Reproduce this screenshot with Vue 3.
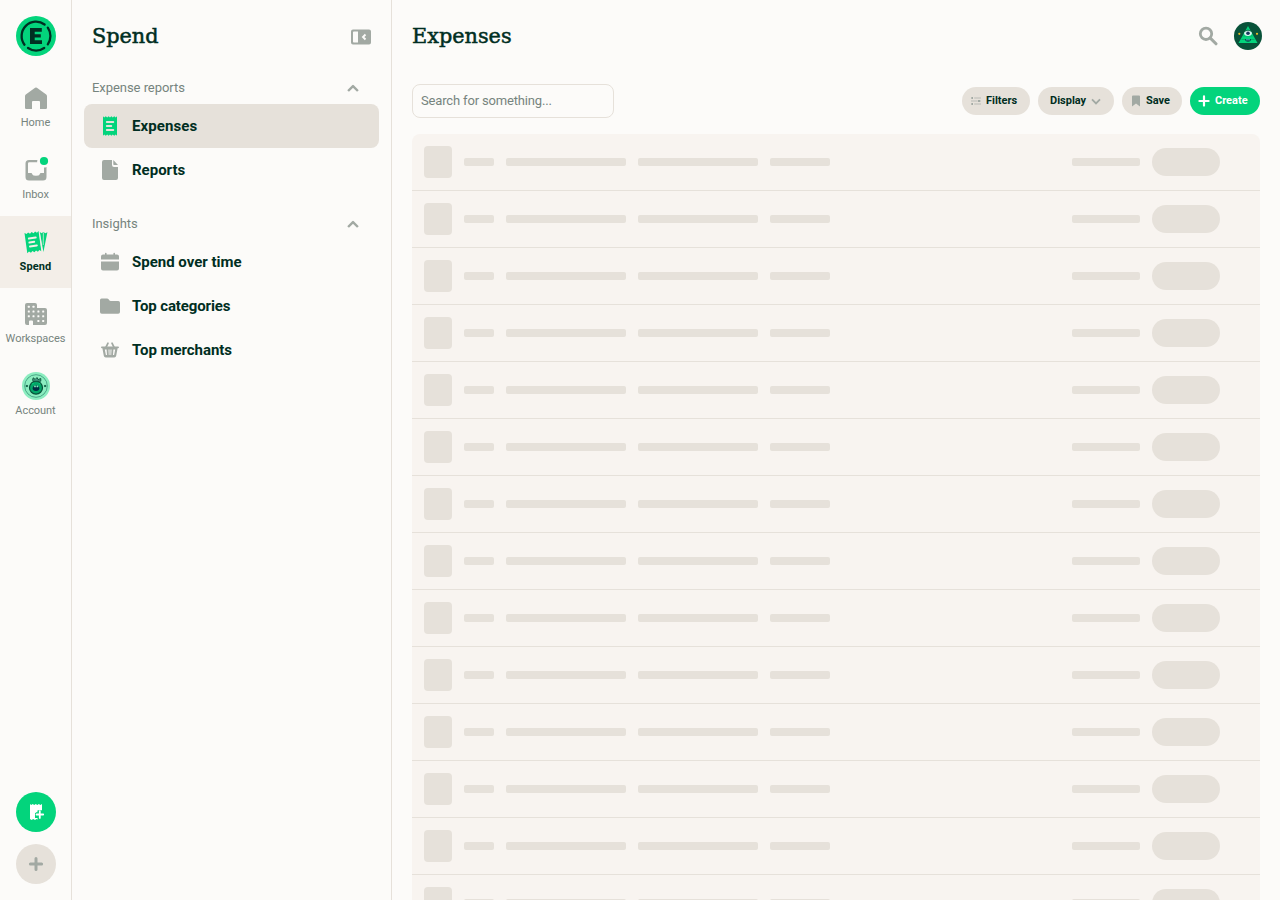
<script setup>
const tabs = ['Home', 'Inbox', 'Spend', 'Workspaces', 'Account']
const sections = [
  { title: 'Expense reports', cls: 's0', items: [['Expenses', 'receipt'], ['Reports', 'document']] },
  { title: 'Insights', cls: 's1', items: [['Spend over time', 'calendar'], ['Top categories', 'folder'], ['Top merchants', 'basket']] },
]
</script>

<template>
  <div class="app">
    <nav class="rail">
      <svg class="logo" viewBox="0 0 40 40">
        <circle cx="20" cy="20" r="20" fill="#03d47c" />
        <g fill="none" stroke="#002e22" stroke-width="2.3" stroke-linecap="round">
          <path d="M8.5 28.7A14.4 14.4 0 0 1 28.6 8.5" />
          <path d="M31.8 11.7A14.4 14.4 0 0 1 31.8 28.3" />
          <path d="M12 32A14.4 14.4 0 0 0 28.2 32" />
        </g>
        <path d="M14 12.1H25.8V15.8H18.7V18.3H24.8V21.6H18.7V24.3H26V28H14Z" fill="#002e22" />
      </svg>
      <div v-for="t in tabs" :key="t" class="tab" :class="[t.toLowerCase(), { active: t === 'Spend' }]">
        <svg v-if="t === 'Home'" class="tab-icon" viewBox="0 0 28 28">
          <path d="M3 12.2Q3 11.2 3.8 10.6L13.1 3.8Q14 3.1 14.9 3.8L24.2 10.6Q25 11.2 25 12.2V23.8Q25 25 23.8 25H18V18Q18 17 17 17H11Q10 17 10 18V25H4.2Q3 25 3 23.8Z" />
        </svg>
        <svg v-else-if="t === 'Inbox'" class="tab-icon" viewBox="0 0 28 28">
          <path fill-rule="evenodd" d="M7 4H15.5Q15 5 15.2 6.2H7.3Q6 6.2 6 7.5V17H9Q10 17 10.4 18.4Q10.9 19.8 14 19.8Q17.1 19.8 17.6 18.4Q18 17 19 17H22V11.5Q23.5 11.5 24.5 11V21Q24.5 24.5 21 24.5H7Q3.5 24.5 3.5 21V7.5Q3.5 4 7 4Z" />
          <circle cx="22" cy="5" r="4.1" fill="#03d47c" />
        </svg>
        <svg v-else-if="t === 'Spend'" class="tab-icon" viewBox="0 0 28 28">
          <g transform="rotate(-8 11 14)">
            <path d="M3.8 4L5.7 5.3 7.5 4 9.2 5.3 11 4 12.8 5.3 14.5 4 16.2 5.3 18 4V24.3L16.2 22.9 14.5 24.3 12.8 22.9 11 24.3 9.2 22.9 7.5 24.3 5.7 22.9 3.8 24.3Z" />
            <path d="M7.4 10H14.3M7.4 14H12.2M7.4 18H14.3" stroke="#f3eee8" stroke-width="2" stroke-linecap="round" />
          </g>
          <path d="M17.8 4L19.6 5.2 21.3 4 23.4 5.2 25.4 4.2 21.4 24Z" />
          <path d="M17.5 5L20.2 23.5M21.4 4.5L21.2 17" stroke="#f3eee8" stroke-width=".7" />
        </svg>
        <svg v-else-if="t === 'Workspaces'" class="tab-icon" viewBox="0 0 28 28">
          <path d="M3 5Q3 3 5 3H13Q15 3 15 5V8H23Q25 8 25 10V23Q25 25 23 25H11V21.5Q11 20.5 10 20.5H8Q7 20.5 7 21.5V25H5Q3 25 3 23Z" />
          <g fill="#fcfbf9">
            <rect v-for="[x, y] in [[5.8,5.8],[10.5,5.8],[5.8,10.5],[10.5,10.5],[15.4,10.5],[20.2,10.5],[5.8,15.3],[10.5,15.3],[15.4,15.3],[20.2,15.3],[15.4,20],[20.2,20]]" :key="x + '-' + y" :x="x" :y="y" width="2" height="2" rx=".5" />
          </g>
        </svg>
        <svg v-else class="tab-icon" viewBox="0 0 28 28">
          <circle cx="14" cy="14" r="14" fill="#8cedc0" />
          <circle cx="14" cy="14" r="11.3" fill="none" stroke="#1c7862" stroke-width=".6" />
          <path d="M3.3 14L5 12.7 6.3 14 5 15.3ZM24.7 14L23 12.7 21.7 14 23 15.3Z" fill="#085239" />
          <circle cx="14" cy="15.7" r="6.5" fill="#03a668" stroke="#085239" stroke-width="1.2" />
          <path d="M10.6 8.2L11.2 5.8 13.2 7.4 15 5.5 16 7.6 18.8 6.5V9.2H11.5Z" fill="#4b9a87" stroke="#085239" stroke-width=".9" />
          <ellipse cx="14" cy="16.2" rx="3.3" ry="2.7" fill="#002e42" />
          <circle cx="13" cy="14.4" r=".9" fill="#8cedc0" /><circle cx="15.4" cy="14.4" r=".9" fill="#8cedc0" />
          <path d="M10 12L11.8 11.3M16.6 11.3L18.3 12" stroke="#03d47c" stroke-width="1" />
        </svg>
        <span>{{ t }}</span>
      </div>
      <div class="rail-actions">
        <svg viewBox="0 0 40 40">
          <circle cx="20" cy="20" r="20" fill="#03d47c" />
          <path d="M14 12L15.2 13 16.7 12 18.2 13 19.8 12 21.3 13 22.8 12 24.4 13 26 12V18.4H21.7V21H19V26H21.7V27.5L20.5 27 19 28 17.2 27 15.6 28 14 27Z" fill="#fff" />
          <path d="M23.8 18.5V26.5M19.8 22.5H27.8" stroke="#03d47c" stroke-width="4.4" />
          <path d="M23.8 19.2V25.9M20.5 22.5H27.2" stroke="#fff" stroke-width="1.8" stroke-linecap="round" />
        </svg>
        <svg viewBox="0 0 40 40">
          <circle cx="20" cy="20" r="20" fill="#e6e1da" />
          <path d="M20 14.4V25.6M14.4 20H25.6" stroke="#a2a9a3" stroke-width="3" stroke-linecap="round" />
        </svg>
      </div>
    </nav>

    <aside class="sidebar">
      <header class="side-head">
        <h1 class="h-spend">Spend</h1>
        <svg class="collapse" width="20" height="16" viewBox="0 0 20 16">
          <path fill="#a2a9a3" fill-rule="evenodd" d="M2 .5H18Q20 .5 20 2.5V13.5Q20 15.5 18 15.5H2Q0 15.5 0 13.5V2.5Q0 .5 2 .5ZM2.8 2.5Q2 2.5 2 3.3V12.7Q2 13.5 2.8 13.5H7V2.5Z" />
          <path d="M14.5 5.5L12 8L14.5 10.5" fill="none" stroke="#fcfbf9" stroke-width="1.9" />
        </svg>
      </header>
      <section v-for="s in sections" :key="s.title" class="section" :class="s.cls">
        <div class="section-title">
          <span>{{ s.title }}</span>
          <svg width="12" height="8" viewBox="0 0 12 8"><path d="M1.1 7L6 2.1L10.9 7" fill="none" stroke="#a2a9a3" stroke-width="2.4" stroke-linejoin="round" /></svg>
        </div>
        <div v-for="[label, icon] in s.items" :key="label" class="item" :class="[icon, { selected: label === 'Expenses' }]">
          <svg class="item-icon" viewBox="0 0 20 20">
            <template v-if="icon === 'receipt'">
              <path fill="#03d47c" d="M3 .3L4.2 1.6 5.8 .3 7.2 1.6 8.6 .3 10 1.6 11.4 .3 12.8 1.6 14.2 .3 15.7 1.6 17 .3V19.7L15.7 18.4 14.2 19.7 12.8 18.4 11.4 19.7 10 18.4 8.6 19.7 7.2 18.4 5.8 19.7 4.2 18.4 3 19.7Z" />
              <path d="M6.8 6H13.3M6.8 10H11.3M6.8 14H13.3" stroke="#e6e1da" stroke-width="1.9" stroke-linecap="round" />
            </template>
            <path v-else-if="icon === 'document'" d="M4 0H12V5Q12 7 14 7H18V18Q18 20 16 20H4Q2 20 2 18V2Q2 0 4 0ZM13.3 0L18 5H14Q13.3 5 13.3 4.3Z" />
            <path v-else-if="icon === 'calendar'" d="M5 1.5Q5 .8 5.8 .8T6.6 1.5V2.5H13.4V1.5Q13.4 .8 14.2 .8T15 1.5V2.5H17Q19 2.5 19 4.5V7.5H1V4.5Q1 2.5 3 2.5H5ZM1 9.5H19V16.5Q19 18.5 17 18.5H3Q1 18.5 1 16.5Z" />
            <path v-else-if="icon === 'folder'" d="M0 4Q0 2.5 1.5 2.5H7Q8 2.5 8.6 3.3L9.3 4.3Q9.8 5 10.7 5H18.3Q20 5 20 6.7V16Q20 17.8 18.2 17.8H1.8Q0 17.8 0 16Z" />
            <g v-else>
              <path d="M6.1 7L8 3.2M13.9 7L12 3.2" stroke="#a2a9a3" stroke-width="1.7" stroke-linecap="round" />
              <path fill-rule="evenodd" d="M2 6.4H18Q19 6.4 19 7.3T18 8.3H17.6L16.2 15.7Q15.9 17.5 14.2 17.5H5.8Q4.1 17.5 3.8 15.7L2.4 8.3H2Q1 8.3 1 7.3T2 6.4ZM4.8 9.5L5.9 15H7L6.6 9.5ZM8.5 9.5L8.8 15H9.5V9.5ZM11.5 9.5 11.2 15H10.5V9.5ZM13.4 9.5L13 15H14.1L15.2 9.5Z" />
            </g>
          </svg>
          <span>{{ label }}</span>
        </div>
      </section>
    </aside>

    <main class="main">
      <header class="main-head">
        <h1 class="h-exp">Expenses</h1>
        <svg class="search-icon" width="20" height="20" viewBox="0 0 20 20"><circle cx="8" cy="7.8" r="5.7" fill="none" stroke="#a2a9a3" stroke-width="2.8" /><path d="M12.3 12.1L18 17.8" stroke="#a2a9a3" stroke-width="3" stroke-linecap="round" /></svg>
        <svg class="avatar" width="28" height="28" viewBox="0 0 28 28">
          <circle cx="14" cy="14" r="14" fill="#085239" />
          <path d="M14 4L23.5 21H4.5Z" fill="#03d47c" />
          <path d="M9.5 14H18.5M7.5 17.5H20.5" stroke="#079b62" stroke-width=".7" />
          <ellipse cx="14" cy="11.3" rx="3.8" ry="2.7" fill="#d9f5ee" /><circle cx="14" cy="11.2" r="1.8" fill="#17355e" />
          <path d="M10.2 9.4Q14 6.8 17.8 9.4" fill="none" stroke="#085239" stroke-width=".8" />
          <path d="M11 17H17Q17 19.8 14 19.8T11 17Z" fill="#064a48" /><path d="M12 17.8H16" stroke="#54d8d8" stroke-width=".8" />
          <circle cx="5.3" cy="11.8" r="1.1" fill="#e7bd24" /><circle cx="23" cy="11.8" r="1.1" fill="#e7bd24" />
        </svg>
      </header>
      <div class="toolbar">
        <input class="search" type="text" placeholder="Search for something..." />
        <div class="buttons">
          <button class="btn filters">
            <svg width="10" height="8" viewBox="0 0 10 8"><path d="M0 1H1.7M3.2 1H10M0 4H6.7M8.2 4H10M0 7H1.7M3.2 7H10" stroke="#b9bbb5" stroke-width="1.1" /><path d="M.5 0H2V2H.5ZM7 3H9V5H7ZM.5 6H2V8H.5Z" /></svg>
            <span>Filters</span>
          </button>
          <button class="btn display">
            <span>Display</span>
            <svg width="10" height="7" viewBox="0 0 10 7"><path d="M1 1.4L5 5.4L9 1.4" fill="none" stroke="#a2a9a3" stroke-width="1.8" /></svg>
          </button>
          <button class="btn save">
            <svg width="8" height="12" viewBox="0 0 8 12"><path d="M0 1.5Q0 .5 1 .5H7Q8 .5 8 1.5V11.5L4 8.5L0 11.5Z" /></svg>
            <span>Save</span>
          </button>
          <button class="btn create">
            <svg width="12" height="12" viewBox="0 0 12 12"><path d="M6 1.4V10.6M1.4 6H10.6" stroke="#fff" stroke-width="2.2" stroke-linecap="round" /></svg>
            <span>Create</span>
          </button>
        </div>
      </div>
      <div class="table">
        <div v-for="n in 14" :key="n" class="row">
          <i class="thumb" /><i class="bar tiny" /><i class="bar long" /><i class="bar long" /><i class="bar mid" />
          <i class="bar amount" /><i class="pill" />
        </div>
      </div>
    </main>
  </div>
</template>

<style>
body { margin: 0; overflow: hidden; }
</style>

<style scoped>
* { box-sizing: border-box; }
.app { display: flex; width: 1280px; height: 900px; overflow: hidden; background: #fcfbf9; color: #002e22; font-family: Roboto, "Liberation Sans", sans-serif; }
svg { display: block; flex: none; fill: #a2a9a3; }
.rail { width: 72px; border-right: 1px solid #e6e1da; display: flex; flex-direction: column; align-items: center; padding: 16px 0; flex: none; }
.logo { width: 40px; height: 40px; margin-bottom: 16px; }
.tab { width: 71px; height: 72px; padding-top: 12px; display: flex; flex-direction: column; align-items: center; font-size: 11px; line-height: 14px; color: #76847e; white-space: nowrap; }
.tab span { margin-top: 4px; letter-spacing: -.05px; }
.tab-icon { width: 28px; height: 28px; }
.tab.active { background: #f3eee8; color: #002e22; font-weight: 700; }
.tab.active span { letter-spacing: .1px; }
.tab.active svg { fill: #03d47c; }
.rail-actions { margin-top: auto; display: flex; flex-direction: column; gap: 12px; }
.rail-actions svg { width: 40px; height: 40px; }
.sidebar { width: 320px; border-right: 1px solid #e6e1da; flex: none; }
h1 { margin: 0; font: 400 20.8px/28px "DejaVu Serif", serif; -webkit-text-stroke: .5px #002e22; }
.side-head { height: 72px; padding: 0 20px; display: flex; align-items: center; justify-content: space-between; }
.collapse { margin-top: 1px; }
.section { padding: 0 12px; }
.section-title { height: 32px; padding: 0 20px 0 8px; display: flex; align-items: center; justify-content: space-between; font-size: 13px; color: #76847e; }
.section-title span { padding-bottom: 2px; letter-spacing: -.05px; }
.s1 { margin-top: 16px; }
.item { height: 44px; border-radius: 8px; padding-left: 16px; display: flex; align-items: center; gap: 12px; font-size: 15px; font-weight: 700; }
.receipt { letter-spacing: .1px; }
.folder { letter-spacing: -.12px; }
.basket { letter-spacing: -.04px; }
.item-icon { width: 20px; height: 20px; }
.selected { background: #e6e1da; }
.main { flex: 1; padding: 0 20px; min-width: 0; }
.main-head { height: 72px; display: flex; align-items: center; }
.search-icon { margin-left: auto; }
.avatar { margin: 0 -2px 0 16px; }
.toolbar { height: 62px; padding-top: 12px; display: flex; justify-content: space-between; }
.search { width: 202px; height: 34px; border: 1px solid #e6e1da; border-radius: 8px; padding: 0 8px 2px; font: 13px Roboto, sans-serif; letter-spacing: -.16px; background: #fcfbf9; outline: 0; }
.search::placeholder { color: #76847e; opacity: 1; }
.buttons { display: flex; gap: 8px; padding-top: 3px; }
.btn { height: 28px; border: 0; border-radius: 14px; background: #e6e1da; color: #002e22; padding: 0; display: flex; align-items: center; font: 700 11px/16px Roboto, sans-serif; }
.filters { width: 68px; padding-left: 9px; gap: 5px; }
.display { width: 76px; padding-left: 12px; gap: 5px; }
.save { width: 60px; padding-left: 10px; gap: 6px; }
.create { width: 70px; padding-left: 8px; gap: 5px; background: #03d47c; color: #fff; }
.table { background: #f8f4f0; border-radius: 8px 8px 0 0; overflow: hidden; height: 766px; }
.row { height: 57px; border-bottom: 1px solid #e6e1da; display: flex; align-items: center; gap: 12px; padding: 0 40px 0 12px; }
.row i { background: #e6e1da; flex: none; }
.thumb { width: 28px; height: 32px; border-radius: 4px; }
.bar { height: 8px; border-radius: 2px; }
.tiny { width: 30px; }
.long { width: 120px; }
.mid { width: 60px; }
.amount { width: 68px; margin-left: auto; }
.pill { width: 68px; height: 28px; border-radius: 14px; }
</style>
